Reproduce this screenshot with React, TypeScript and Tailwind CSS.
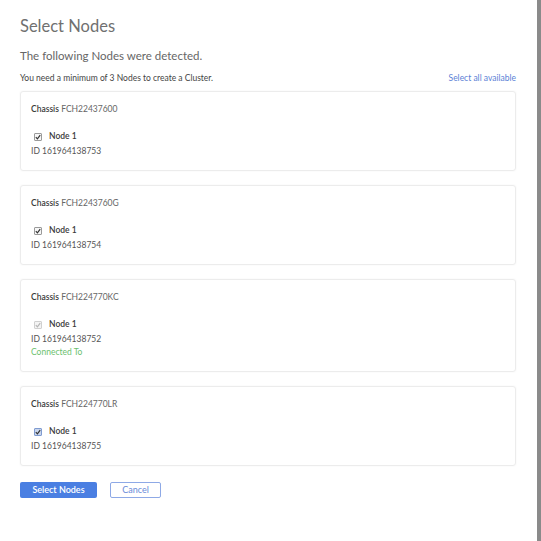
import React from "react";

type Node = {
  chassis: string;
  id: string;
  state: "checked" | "disabled" | "focused";
  connected?: boolean;
};

const nodes: Node[] = [
  { chassis: "FCH22437600", id: "161964138753", state: "checked" },
  { chassis: "FCH2243760G", id: "161964138754", state: "checked" },
  { chassis: "FCH224770KC", id: "161964138752", state: "disabled", connected: true },
  { chassis: "FCH224770LR", id: "161964138755", state: "focused" },
];

const Check = ({ state }: { state: Node["state"] }) => {
  const box =
    state === "focused"
      ? "bg-[#c9d6ee] border-[#7f9bd0]"
      : state === "disabled"
        ? "bg-[#f4f4f4] border-[#d0d0d0]"
        : "bg-[#f7f7f7] border-[#9a9a9a]";
  const stroke = state === "disabled" ? "#b5b5b5" : "#333";
  return (
    <span className={`inline-flex items-center justify-center w-[8px] h-[8px] border rounded-[1px] ${box}`}>
      <svg width="6" height="6" viewBox="0 0 6 6">
        <path d="M0.8 3.2 L2.4 4.8 L5.2 1.2" fill="none" stroke={stroke} strokeWidth="1.2" />
      </svg>
    </span>
  );
};

const NodeCard = ({ node }: { node: Node }) => (
  <div className="border border-[#ececec] rounded-[3px] shadow-[0_0_2px_rgba(0,0,0,0.06)] px-[10px] pt-[11px] pb-[12px] text-[8.5px] leading-[13px]">
    <div className="h-[13px] text-[#666]">
      <span className="font-semibold text-[#3a3a3a]">Chassis</span> {node.chassis}
    </div>
    <div className="mt-[14px] flex items-center h-[13px] pl-[3px]">
      <Check state={node.state} />
      <span className="ml-[7px] font-semibold text-[#3a3a3a] leading-[13px]">Node 1</span>
    </div>
    <div className="mt-[2px] h-[13px] text-[#555]">ID {node.id}</div>
    {node.connected && <div className="h-[13px] text-[#6cbf6e]">Connected To</div>}
  </div>
);

export default function App() {
  return (
    <div className="flex w-[541px] h-[541px] bg-white" style={{ fontFamily: "Lato, 'Open Sans', sans-serif" }}>
      <div className="w-[537px] pl-[20px] pr-[21px] pt-[15px]">
        <h1 className="text-[16.5px] leading-[22px] text-[#707070]">Select Nodes</h1>
        <p className="mt-[11px] text-[11.5px] leading-[16px] text-[#666]">The following Nodes were detected.</p>
        <div className="mt-[8px] flex justify-between text-[8.5px] leading-[12px]">
          <span className="text-[#444]">You need a minimum of 3 Nodes to create a Cluster.</span>
          <span className="text-[#5b7fd6]">Select all available</span>
        </div>
        <div className="mt-[7px] flex flex-col gap-[14px]">
          {nodes.map((n) => (
            <NodeCard key={n.id} node={n} />
          ))}
        </div>
        <div className="mt-[16px] flex gap-[13px]">
          <button className="w-[77px] h-[16px] rounded-[2px] bg-[#4a7fe2] text-white text-[9px] font-semibold leading-[16px]">
            Select Nodes
          </button>
          <button className="w-[51px] h-[16px] rounded-[2px] border border-[#8ea9e6] text-[#6a8ad8] text-[9px] leading-[14px]">
            Cancel
          </button>
        </div>
      </div>
      <div className="w-[4px] h-full bg-[#8a8a8a]" />
    </div>
  );
}
